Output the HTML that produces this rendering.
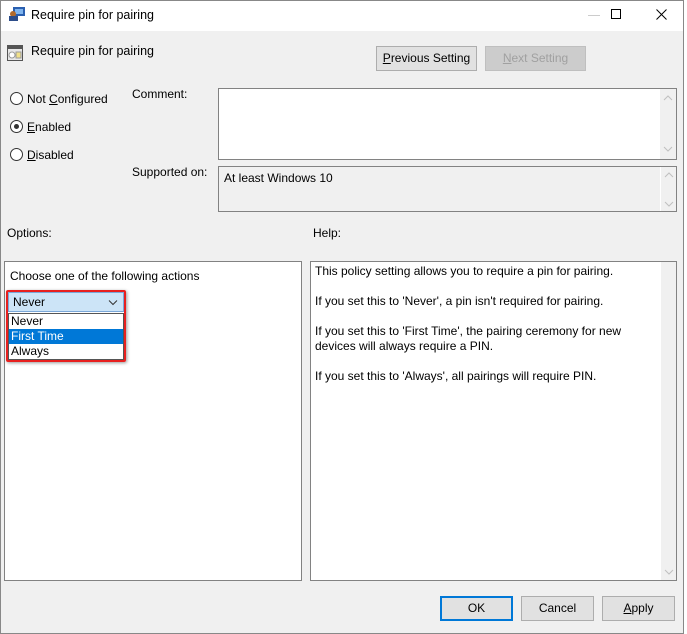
<!DOCTYPE html><html><head><style>
*{box-sizing:border-box}
body{margin:0;width:687px;height:634px;background:#fff;font-family:"Liberation Sans",sans-serif;font-size:12px;color:#000;position:relative;overflow:hidden}
.a{position:absolute}
.win{left:0;top:0;width:684px;height:634px;background:#f0f0f0;border:1px solid #888}
.tb{left:1px;top:1px;width:682px;height:30px;background:#fff}
.btn{position:absolute;background:#e1e1e1;border:1px solid #adadad;text-align:center;line-height:23px;height:25px}
.box{position:absolute;background:#fff;border:1px solid #828282}
.sb{position:absolute;right:0;top:0;bottom:0;width:16px;background:#f0f0f0}
.rad{position:absolute;width:13px;height:13px;border:1px solid #333;border-radius:50%;background:#fff}
u{text-decoration:underline}
</style></head><body>
<div class="a win"></div>
<div class="a tb"></div>
<svg class="a" style="left:8px;top:6px" width="18" height="16"><rect x="5" y="1" width="12" height="9" fill="#2a5fb0"/><rect x="7" y="3" width="8" height="5" fill="#7fb4ee"/><circle cx="5" cy="8" r="3" fill="#b36a2a"/><rect x="1" y="10" width="9" height="5" fill="#2d4d8a"/></svg>
<div class="a" style="left:31px;top:8px;font-size:12.5px">Require pin for pairing</div>
<div class="a" style="left:588px;top:15px;width:12px;height:1px;background:#ccc"></div>
<div class="a" style="left:611px;top:9px;width:10px;height:10px;border:1px solid #000"></div>
<svg class="a" style="left:656px;top:9px" width="11" height="11"><path d="M0.5 0.5L10.5 10.5M10.5 0.5L0.5 10.5" stroke="#000" stroke-width="1"/></svg>
<svg class="a" style="left:7px;top:45px" width="16" height="16"><rect x="0.5" y="0.5" width="15" height="15" fill="#e8e8e8" stroke="#555"/><rect x="1" y="1" width="14" height="3" fill="#555"/><circle cx="5" cy="10" r="3" fill="#fff" stroke="#999"/><rect x="9" y="7" width="5" height="6" fill="#f0e08a" stroke="#999"/></svg>
<div class="a" style="left:31px;top:44px;font-size:12.5px">Require pin for pairing</div>
<div class="btn" style="left:376px;top:46px;width:101px"><u>P</u>revious Setting</div>
<div class="btn" style="left:485px;top:46px;width:101px;background:#ccc;border-color:#bfbfbf;color:#a0a0a0"><u>N</u>ext Setting</div>
<div class="rad" style="left:10px;top:92px"></div><div class="a" style="left:27px;top:92px">Not <u>C</u>onfigured</div>
<div class="rad" style="left:10px;top:120px"></div><div class="a" style="left:14px;top:124px;width:5px;height:5px;border-radius:50%;background:#333"></div><div class="a" style="left:27px;top:120px"><u>E</u>nabled</div>
<div class="rad" style="left:10px;top:148px"></div><div class="a" style="left:27px;top:148px"><u>D</u>isabled</div>
<div class="a" style="left:132px;top:87px">Comment:</div>
<div class="box" style="left:218px;top:88px;width:459px;height:72px"><div class="sb"><svg class="a" style="left:3px;top:5px" width="10" height="60"><path d="M1 6L5 2L9 6M1 53L5 57L9 53" stroke="#c0c0c0" fill="none"/></svg></div></div>
<div class="a" style="left:132px;top:165px">Supported on:</div>
<div class="box" style="left:218px;top:166px;width:459px;height:46px;background:#f0f0f0"><div class="a" style="left:5px;top:4px">At least Windows 10</div><div class="sb" style="border-left:1px solid #fff"><svg class="a" style="left:3px;top:4px" width="10" height="38"><path d="M1 6L5 2L9 6M1 31L5 35L9 31" stroke="#c0c0c0" fill="none"/></svg></div></div>
<div class="a" style="left:7px;top:226px">Options:</div>
<div class="a" style="left:313px;top:226px">Help:</div>
<div class="box" style="left:4px;top:261px;width:298px;height:320px">
<div class="a" style="left:5px;top:7px">Choose one of the following actions</div></div>
<div class="box" style="left:310px;top:261px;width:367px;height:320px;line-height:15px">
<div class="a" style="left:4px;top:2px;width:340px">This policy setting allows you to require a pin for pairing.<br><br>If you set this to 'Never', a pin isn't required for pairing.<br><br>If you set this to 'First Time', the pairing ceremony for new devices will always require a PIN.<br><br>If you set this to 'Always', all pairings will require PIN.</div>
<div class="sb" style="border-left:1px solid #fff"><svg class="a" style="left:3px;bottom:4px" width="10" height="8"><path d="M1 2L5 6L9 2" stroke="#c0c0c0" fill="none"/></svg></div></div>
<div class="a" style="left:6px;top:290px;width:120px;height:72px;border:2px solid #e8201f;border-radius:2px;box-shadow:1px 1px 3px rgba(0,0,0,.4)"></div>
<div class="a" style="left:8px;top:292px;width:116px;height:20px;background:#cce4f7;border:1px solid #7aa7d8;padding:2px 4px">Never<svg class="a" style="right:5px;top:6px" width="10" height="7"><path d="M1 1.5L5 5.5L9 1.5" stroke="#333" fill="none"/></svg></div>
<div class="a" style="left:8px;top:313px;width:116px;height:47px;background:#fff;border:1px solid #555;line-height:15px">
<div style="padding-left:2px">Never</div><div style="padding-left:2px;background:#0078d7;color:#fff">First Time</div><div style="padding-left:2px;height:14px;overflow:hidden">Always</div></div>
<div class="btn" style="left:440px;top:596px;width:73px;border:2px solid #0078d7;line-height:21px">OK</div>
<div class="btn" style="left:521px;top:596px;width:73px">Cancel</div>
<div class="btn" style="left:602px;top:596px;width:73px"><u>A</u>pply</div>
</body></html>
